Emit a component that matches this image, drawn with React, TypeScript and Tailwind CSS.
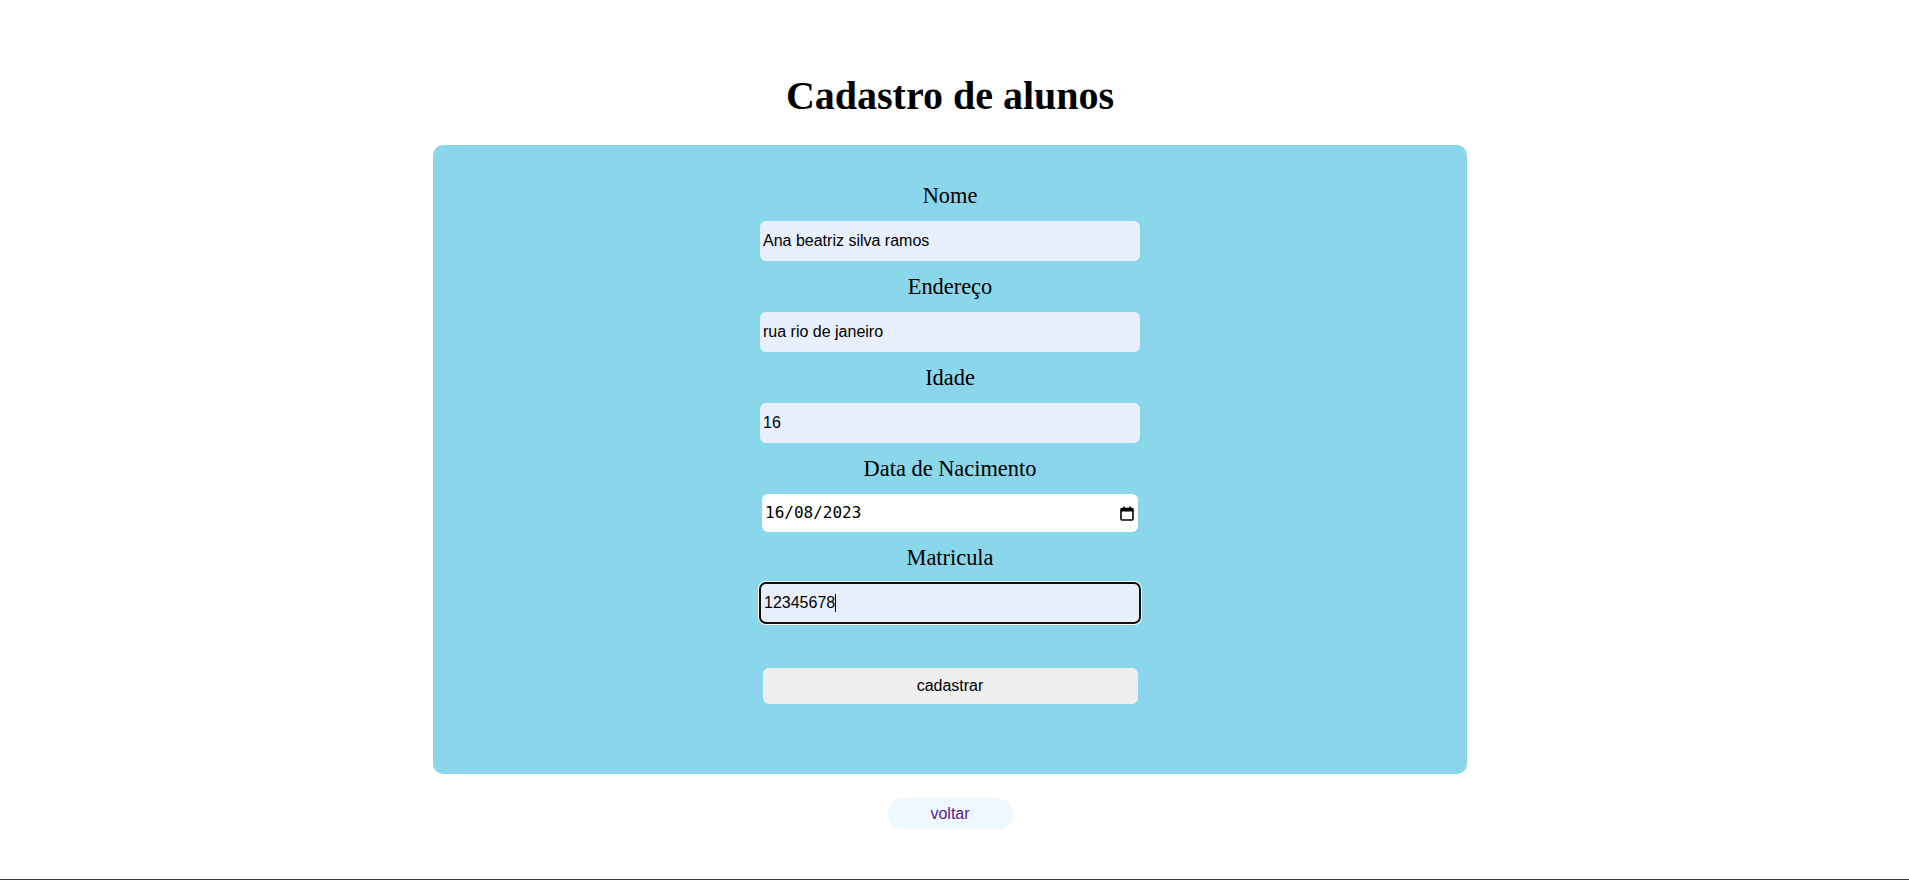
import React from "react";

const fields = [
  { label: "Nome", value: "Ana beatriz silva ramos" },
  { label: "Endereço", value: "rua rio de janeiro" },
  { label: "Idade", value: "16" },
];

const CalendarIcon = () => (
  <svg width="14" height="15" viewBox="0 0 14 15" fill="none">
    <rect x="1" y="2.5" width="12" height="11.5" rx="1" stroke="#000" strokeWidth="1.6" />
    <rect x="1" y="2.5" width="12" height="3" fill="#000" />
    <rect x="3.3" y="0.5" width="1.6" height="3" fill="#000" />
    <rect x="9.1" y="0.5" width="1.6" height="3" fill="#000" />
  </svg>
);

const Label = ({ children }: { children: React.ReactNode }) => (
  <div className="pt-[12px] pb-[11px] text-[22.4px] leading-[28px] text-black text-center">
    {children}
  </div>
);

export default function App() {
  return (
    <div className="h-[880px] w-full bg-white border-b border-[#3c3c3c] font-['Liberation_Serif',serif]">
      <div className="w-[1900px] flex flex-col items-center pt-[73px]">
        <h1 className="text-[40px] leading-[46px] font-bold text-black mb-[26px]">
          Cadastro de alunos
        </h1>

        {/* Form */}
        <div className="w-[1034px] h-[629px] rounded-[10px] bg-[#8ad6ea] pt-[25px] flex flex-col items-center">
          {fields.map((f) => (
            <div key={f.label} className="flex flex-col items-center">
              <Label>{f.label}</Label>
              <input
                type="text"
                defaultValue={f.value}
                className="w-[380px] h-[40px] rounded-[6px] bg-[#e8f0fe] px-[3px] text-[16px] text-black font-['Liberation_Sans',Arial,sans-serif] outline-none"
              />
            </div>
          ))}

          <div className="flex flex-col items-center">
            <Label>Data de Nacimento</Label>
            <div className="w-[376px] h-[38px] rounded-[6px] bg-white flex items-center justify-between pl-[3px] pr-[4px]">
              <span className="text-[16px] text-black font-['DejaVu_Sans_Mono',monospace]">
                16/08/2023
              </span>
              <CalendarIcon />
            </div>
          </div>

          <div className="flex flex-col items-center">
            <Label>Matricula</Label>
            <div className="w-[380px] h-[40px] rounded-[6px] bg-[#e8f0fe] pl-[4px] flex items-center outline-2 outline-[#101010] -outline-offset-1 shadow-[0_0_0_2px_#ffffff] text-[16px] text-black font-['Liberation_Sans',Arial,sans-serif]">
              <span>12345678</span>
              <span className="w-px h-[18px] bg-black" />
            </div>
          </div>

          <button className="mt-[45px] w-[375px] h-[36px] rounded-[6px] bg-[#efefef] text-[16px] text-black font-['Liberation_Sans',Arial,sans-serif]">
            cadastrar
          </button>
        </div>

        <a
          href="#"
          className="mt-[24px] w-[125px] h-[31px] rounded-full bg-[#f0f8ff] flex items-center justify-center text-[16px] text-[#551a8b] font-['Liberation_Sans',Arial,sans-serif]"
        >
          voltar
        </a>
      </div>
    </div>
  );
}
